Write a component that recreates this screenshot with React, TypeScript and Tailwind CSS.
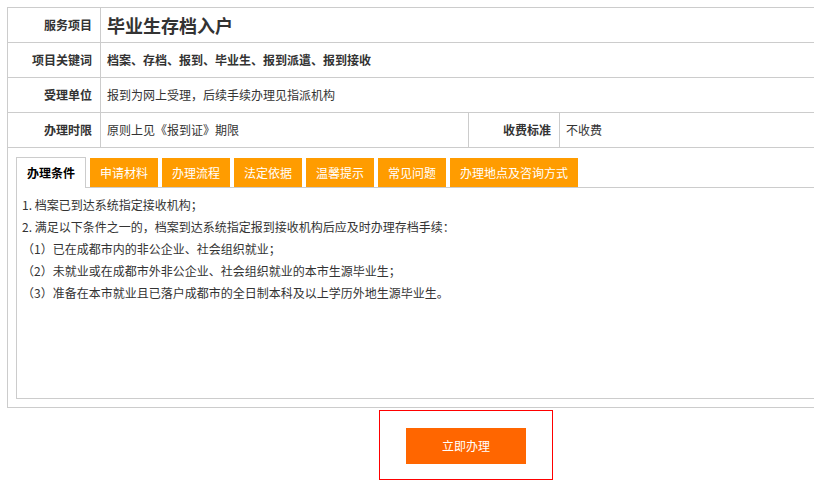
import React from "react";

const tabs = ["申请材料", "办理流程", "法定依据", "温馨提示", "常见问题", "办理地点及咨询方式"];

const lines = [
  "1. 档案已到达系统指定接收机构；",
  "2. 满足以下条件之一的，档案到达系统指定报到接收机构后应及时办理存档手续：",
  "（1）已在成都市内的非公企业、社会组织就业；",
  "（2）未就业或在成都市外非公企业、社会组织就业的本市生源毕业生；",
  "（3）准备在本市就业且已落户成都市的全日制本科及以上学历外地生源毕业生。",
];

function Label({ children, w = "w-[93px]" }: { children: React.ReactNode; w?: string }) {
  return (
    <div className={`${w} shrink-0 border-r border-[#cccccc] flex items-center justify-end pr-[8px] text-[12px] font-bold text-[#333333]`}>
      {children}
    </div>
  );
}

export default function App() {
  return (
    <div className="w-[814px] h-[502px] overflow-hidden bg-white text-[#333333] font-['Microsoft_YaHei','Noto_Sans_CJK_SC',sans-serif]">
      <div className="w-[940px] pl-[7px] pt-[7px]">
        <div className="w-[918px] border border-[#cccccc]">
          <div className="flex h-[35px] border-b border-[#cccccc]">
            <Label>服务项目</Label>
            <div className="flex items-center pl-[6px] text-[18px] font-bold text-[#333333]">毕业生存档入户</div>
          </div>
          <div className="flex h-[35px] border-b border-[#cccccc]">
            <Label>项目关键词</Label>
            <div className="flex items-center pl-[6px] text-[12px] font-bold">档案、存档、报到、毕业生、报到派遣、报到接收</div>
          </div>
          <div className="flex h-[35px] border-b border-[#cccccc]">
            <Label>受理单位</Label>
            <div className="flex items-center pl-[6px] text-[12px]">报到为网上受理，后续手续办理见指派机构</div>
          </div>
          <div className="flex h-[35px] border-b border-[#cccccc]">
            <Label>办理时限</Label>
            <div className="w-[368px] shrink-0 border-r border-[#cccccc] flex items-center pl-[6px] text-[12px]">原则上见《报到证》期限</div>
            <Label w="w-[91px]">收费标准</Label>
            <div className="flex items-center pl-[6px] text-[12px]">不收费</div>
          </div>
          <div className="pl-[8px] pr-[8px] pt-[9px] pb-[8px]">
            <div className="flex items-end gap-[4px] h-[30px]">
              <div className="relative z-10 -mb-px h-[31px] px-[10px] bg-white border border-b-0 border-[#cccccc] flex items-center text-[12px] font-bold text-black">
                办理条件
              </div>
              {tabs.map((t) => (
                <div key={t} className="h-[29px] px-[10px] bg-[#ff9c00] flex items-center text-[12px] text-white">
                  {t}
                </div>
              ))}
            </div>
            <div className="h-[212px] border border-[#cccccc] pl-[5px] pt-[6px] text-[12px] leading-[22px] text-[#333333]">
              {lines.map((l) => (
                <div key={l} className="whitespace-nowrap">{l}</div>
              ))}
            </div>
          </div>
        </div>
        <div className="w-[918px] flex justify-center mt-[2px]">
          <div className="border border-[#ff0000] px-[26px] pt-[17px] pb-[15px]">
            <button className="w-[120px] h-[36px] bg-[#ff6600] text-white text-[12px] flex items-center justify-center">
              立即办理
            </button>
          </div>
        </div>
      </div>
    </div>
  );
}
